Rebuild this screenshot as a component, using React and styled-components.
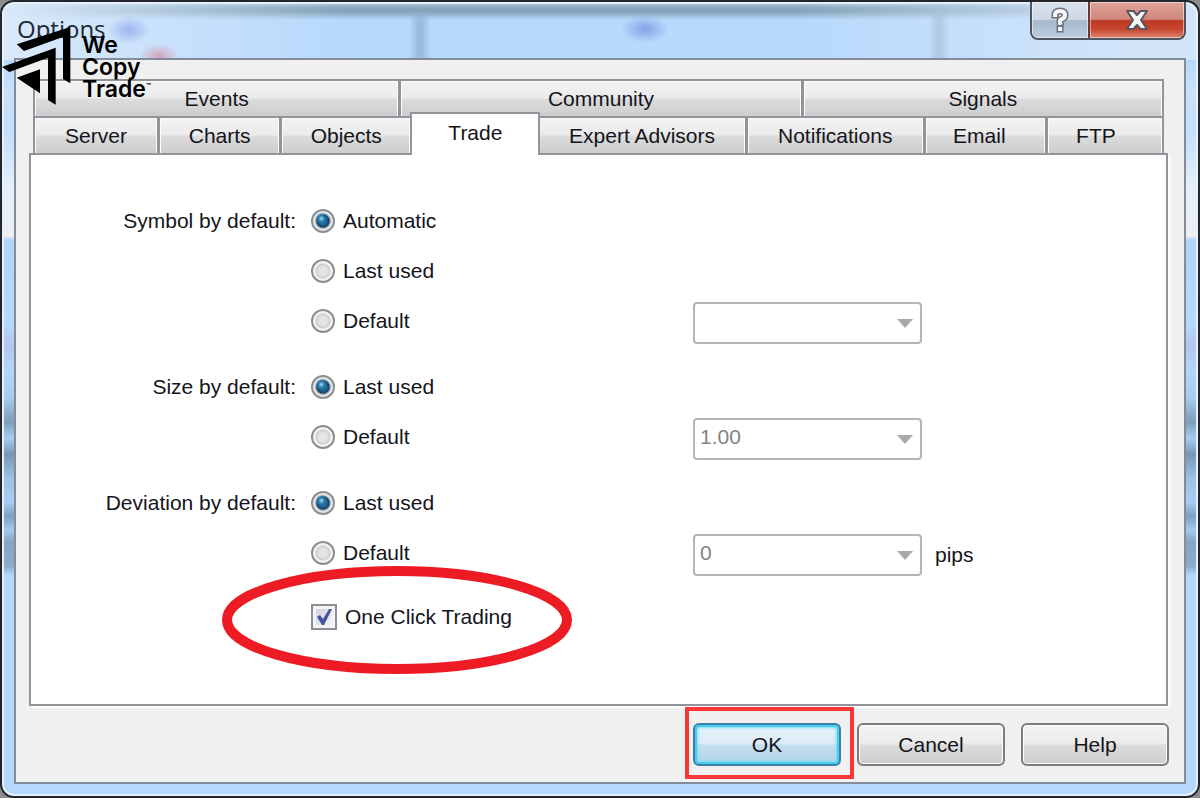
import React from 'react';
import styled, { createGlobalStyle, css } from 'styled-components';

const GlobalStyle = createGlobalStyle`
  *, *::before, *::after { box-sizing: border-box; }
  body {
    margin: 0;
    background: #fff;
    color: #14141c;
    font-family: "Liberation Sans", Arial, sans-serif;
    font-size: 21px;
    line-height: 24px;
  }
  button, select { font: inherit; color: inherit; }
`;

const gloss = 'linear-gradient(#f3f3f3 0%, #ebebeb 48%, #dcdcdc 52%, #cdcdcd 100%)';

const Desktop = styled.div`
  display: flex;
  min-height: 100vh;
  padding-bottom: 2px;
  background: linear-gradient(#8d8d8d, #8d8d8d) no-repeat 0 0 / 100% calc(100% - 2px);
`;

const Window = styled.main`
  position: relative;
  flex: 1;
  display: flex;
  flex-direction: column;
  padding: 0 12px 12px;
  border: 2px solid #24262c;
  border-radius: 14px;
  box-shadow: inset 0 0 0 2px #e3f1fe;
  background:
    radial-gradient(ellipse 22px 14px at 127px 28px, #9fb4ef 0%, #9fb4ef00 100%),
    radial-gradient(ellipse 20px 12px at 157px 54px, #cfa5bd 0%, #cfa5bd00 100%),
    radial-gradient(ellipse 24px 14px at 643px 27px, #8ca6ea 10%, #8ca6ea00 100%),
    linear-gradient(90deg, #d9e9fa, #d9e9fa00 340px, #d9e9fa00 calc(100% - 400px), #d3e5f9 calc(100% - 60px)) no-repeat 0 0 / 100% 58px,
    linear-gradient(90deg, #8fb0ce00, #8fb0ceb0 40%, #8fb0ceb0 60%, #8fb0ce00) no-repeat 407px 10px / 22px 48px,
    linear-gradient(90deg, #8fa9c400, #8fa9c4b0 40%, #8fa9c4b0 60%, #8fa9c400) no-repeat 926px 10px / 22px 48px,
    linear-gradient(#b8d2e8 0px, #86a5ba 6px, #86a5ba 10px, #86a5ba00 18px) no-repeat 0 0 / 100% 18px,
    linear-gradient(#b7d9fc 0px, #b7d9fc 58px, #c9e1fb 90px, #c3dffb 130px, #e6f0fa 190px, #eceff3 234px, #b0d5fb 238px, #b7d9fc 320px,
      #b3c6f3 344px, #b3d7fc 370px, #a9cbec 396px, #7d9db8 420px, #a9cdf1 436px, #7797b3 452px, #9dc0e4 476px,
      #a5cdf5 500px, #7fa0c6 514px, #a5c8ec 528px, #87a6c4 540px, #8baccb 564px, #b5d9fd 574px, #b5d9fd 100%);
`;

const TitleBar = styled.header`
  display: flex;
  justify-content: space-between;
  align-items: flex-start;
  height: 56px;
`;

const Title = styled.h1`
  margin: 0;
  padding: 11px 0 0 3px;
  font: 400 24px/32px "Open Sans", "Noto Sans", sans-serif;
  color: #202838;
`;

const Caption = styled.div`
  display: flex;
  overflow: hidden;
  border: 2px solid #4c5561;
  border-top: 0;
  border-radius: 0 0 8px 8px;
`;

const CaptionButton = styled.button`
  display: grid;
  place-items: center;
  width: ${(p) => (p.$danger ? 96 : 56)}px;
  height: 36px;
  padding: 0;
  border: 0;
  box-shadow: inset 0 0 0 1px #ffffff80;
  background: ${(p) => (p.$danger
    ? 'linear-gradient(#dfa49a 0%, #d1877b 48%, #bd3a22 52%, #c8452e 75%, #dc8670 100%)'
    : 'linear-gradient(#d9e2ec 0%, #ced9e5 48%, #a6b9cc 52%, #bccddf 100%)')};
  ${(p) => p.$danger && css`border-left: 2px solid #6d3831;`}
`;

const Client = styled.section`
  flex: 1;
  display: flex;
  flex-direction: column;
  padding: 19px 15px 16px 13px;
  border: 2px solid #858c99;
  background: #f0f0f0;
`;

const TabRow = styled.div`
  display: grid;
  grid-template-columns: ${(p) => p.$columns};
  height: 37px;
  margin: 0 5px 0 4px;
  border: solid #92949c;
  border-width: 2px 2px 0;
`;

const Tab = styled.button`
  min-width: 0;
  padding: 0 ${(p) => p.$shift || 0}px 0 0;
  border: 0;
  white-space: nowrap;
  background: ${gloss};
  box-shadow: inset 1px 1px #fcfcfc, inset -1px 0 #fcfcfc;
  &:not(:first-child) { border-left: 3px solid #92949c; }
  &[aria-selected="true"] {
    position: relative;
    z-index: 1;
    margin: -6px -1px -2px 0;
    padding-bottom: 4px;
    border: 2px solid #92949c;
    border-bottom: 0;
    background: #fff;
    box-shadow: none;
  }
  &[aria-selected="true"] + * { border-left: 0; }
`;

const Panel = styled.div`
  flex: 1;
  display: flex;
  flex-direction: column;
  gap: 16px;
  margin-right: 1px;
  padding: 41px 0 31px;
  border: 2px solid #92949c;
  background: #fff;
  box-shadow: 3px 2px #fbfbfb;
`;

const Group = styled.div`
  display: grid;
  grid-template-columns: 265px 397px 229px 1fr;
  grid-auto-rows: ${(p) => (p.$compact ? 46 : 50)}px;
  align-items: center;
`;

const GroupLabel = styled.span`
  grid-column: 1;
  text-align: right;
`;

const Choice = styled.label`
  position: relative;
  grid-column: 2;
  justify-self: start;
  display: flex;
  align-items: center;
  gap: 8px;
  margin-left: 15px;
`;

const Radio = styled.input`
  appearance: none;
  width: 24px;
  height: 24px;
  margin: 0;
  border: 2px solid #8b8e92;
  border-radius: 50%;
  background: radial-gradient(circle, #e6e7e9 0, #dfe1e3 5px, #c9cccf 7px, #f4f4f4 8px);
  &:checked {
    background: radial-gradient(circle at 42% 38%, #9fe0f7 0, #2c87b8cc 3px, #2c87b800 6px),
      radial-gradient(circle, #1d6290 4px, #173f60 6px, #d9dcdf 8px, #f1f1f2 10px);
  }
`;

const Tick = styled.input`
  appearance: none;
  width: 26px;
  height: 26px;
  margin: 0;
  border: 2px solid #8b8e92;
  background: linear-gradient(135deg, #ced2dc, #f3f4f6) no-repeat center / 16px 16px #f4f4f4;
`;

const TickMark = styled.svg`
  position: absolute;
  left: 0;
  top: 0;
  pointer-events: none;
`;

const Ring = styled.svg`
  position: absolute;
  left: -90px;
  top: -39px;
  pointer-events: none;
`;

const Combo = styled.div`
  position: relative;
  grid-column: 3;
  height: 42px;
  margin-top: 4px;
  svg { position: absolute; right: 9px; top: 17px; pointer-events: none; }
`;

const Select = styled.select`
  appearance: none;
  width: 100%;
  height: 100%;
  padding: 0 30px 4px 5px;
  border: 2px solid #b5b5b5;
  border-radius: 4px;
  background: #fff;
  &:disabled { color: #838383; opacity: 1; }
`;

const Unit = styled.span`
  grid-column: 4;
  padding: 4px 0 0 13px;
`;

const Footer = styled.footer`
  display: flex;
  justify-content: flex-end;
  gap: 16px;
  padding-top: 17px;
`;

const PushButton = styled.button`
  width: 148px;
  height: 43px;
  padding: 0;
  border: 2px solid #7d7d7d;
  border-radius: 6px;
  background: ${gloss};
  box-shadow: inset 0 0 0 1px #fbfbfb;
  ${(p) => p.$primary && css`
    border-color: #3e80a8;
    background: linear-gradient(#e9f3fa 0%, #dcebf5 48%, #c4dfee 52%, #b3d5e8 100%);
    box-shadow: inset 0 0 0 2px #45cdf3, inset 0 0 3px 3px #7fdcf5;
  `}
`;

const Highlight = styled.div`
  position: relative;
  &::after {
    content: "";
    position: absolute;
    inset: -16px -13px -13px -8px;
    border: 4px solid #fb3636;
    pointer-events: none;
  }
`;

const Brand = styled.div`
  position: absolute;
  z-index: 2;
  left: 0;
  top: 22px;
  display: flex;
  gap: 8px;
  color: #000;
  font: 600 23px/22px Inter, sans-serif;
  svg { display: block; }
`;

const BrandName = styled.div`
  padding-top: 10px;
  p { margin: 0; }
  sup { font-size: 8px; line-height: 8px; vertical-align: 8px; }
`;

const topTabs = [
  { name: 'Events', width: 363 },
  { name: 'Community', width: 402 },
  { name: 'Signals', width: 361 },
];

const tabs = [
  { name: 'Server', width: 122 },
  { name: 'Charts', width: 122 },
  { name: 'Objects', width: 131 },
  { name: 'Trade', width: 129, active: true },
  { name: 'Expert Advisors', width: 205 },
  { name: 'Notifications', width: 178 },
  { name: 'Email', width: 122, shift: 12 },
  { name: 'FTP', width: 117, shift: 18 },
];

const groups = [
  { id: 'symbol', label: 'Symbol by default:', options: ['Automatic', 'Last used', 'Default'], value: '' },
  { id: 'size', label: 'Size by default:', options: ['Last used', 'Default'], value: '1.00' },
  { id: 'deviation', label: 'Deviation by default:', options: ['Last used', 'Default'], value: '0', unit: 'pips' },
];

function Tabs({ items }) {
  return (
    <TabRow role="tablist" $columns={items.map((t) => `minmax(0, ${t.width}fr)`).join(' ')}>
      {items.map((t) => (
        <Tab key={t.name} type="button" role="tab" aria-selected={!!t.active} $shift={t.shift}>
          {t.name}
        </Tab>
      ))}
    </TabRow>
  );
}

function DefaultGroup({ id, label, options, value, unit }) {
  return (
    <Group role="radiogroup" aria-labelledby={`${id}-label`}>
      <GroupLabel id={`${id}-label`}>{label}</GroupLabel>
      {options.map((o, i) => (
        <Choice key={o}>
          <Radio type="radio" name={id} defaultChecked={i === 0} />
          {o}
        </Choice>
      ))}
      <Combo>
        <Select aria-label={`${label} value`} disabled defaultValue={value}>
          <option value={value}>{value}</option>
        </Select>
        <svg width="16" height="9" viewBox="0 0 16 9" aria-hidden="true"><path d="M0 0h16L8 9z" fill="#a9a9a9" /></svg>
      </Combo>
      {unit && <Unit>{unit}</Unit>}
    </Group>
  );
}

export default function App() {
  return (
    <Desktop>
      <GlobalStyle />
      <Window>
        <Brand>
          <svg width="72" height="82" viewBox="6 72 216 246" aria-hidden="true">
            <path d="M50 133 211 81V250L189 237V111L72 153z" />
            <path d="M6 201 167 143V314L144 300V173L28 216z" />
            <path d="M50 233 120 208V280z" />
          </svg>
          <BrandName>
            <p>We</p>
            <p>Copy</p>
            <p>Trade<sup>™</sup></p>
          </BrandName>
        </Brand>
        <TitleBar>
          <Title>Options</Title>
          <Caption>
            <CaptionButton type="button" aria-label="Context help">
              <svg width="22" height="28" viewBox="0 0 22 28" fill="none" strokeLinecap="square" aria-hidden="true">
                <g stroke="#6a727d" strokeWidth="7">
                  <path d="M6 9Q6 5 11 5T16 9Q16 12 13 13T11 17" />
                  <path d="M11 23h0.100" />
                </g>
                <g stroke="#f7f7f7" strokeWidth="4">
                  <path d="M6 9Q6 5 11 5T16 9Q16 12 13 13T11 17" />
                  <path d="M11 23h0.100" />
                </g>
              </svg>
            </CaptionButton>
            <CaptionButton type="button" aria-label="Close" $danger>
              <svg width="24" height="20" viewBox="0 0 24 20" aria-hidden="true">
                <path d="M2 1H8.500L12 5 15.500 1H22L16 10 22 19H15.500L12 15 8.500 19H2L8 10z" fill="#f5f5f5" stroke="#5a5560" strokeWidth="2" strokeLinejoin="round" />
              </svg>
            </CaptionButton>
          </Caption>
        </TitleBar>
        <Client>
          <Tabs items={topTabs} />
          <Tabs items={tabs} />
          <Panel role="tabpanel">
            {groups.map((g) => <DefaultGroup key={g.id} {...g} />)}
            <Group $compact>
              <Choice>
                <Tick type="checkbox" defaultChecked />
                One Click Trading
                <TickMark width="26" height="26" viewBox="0 0 26 26" aria-hidden="true">
                  <path d="M6 13 9 11 12 15 18 5 21 5 13 21H11z" fill="#44549f" />
                </TickMark>
                <Ring width="352" height="110" viewBox="0 0 352 110" aria-hidden="true">
                  <ellipse cx="176" cy="55" rx="170" ry="49" fill="none" stroke="#ed1c24" strokeWidth="10" />
                </Ring>
              </Choice>
            </Group>
          </Panel>
          <Footer>
            <Highlight><PushButton type="button" $primary>OK</PushButton></Highlight>
            <PushButton type="button">Cancel</PushButton>
            <PushButton type="button">Help</PushButton>
          </Footer>
        </Client>
      </Window>
    </Desktop>
  );
}
